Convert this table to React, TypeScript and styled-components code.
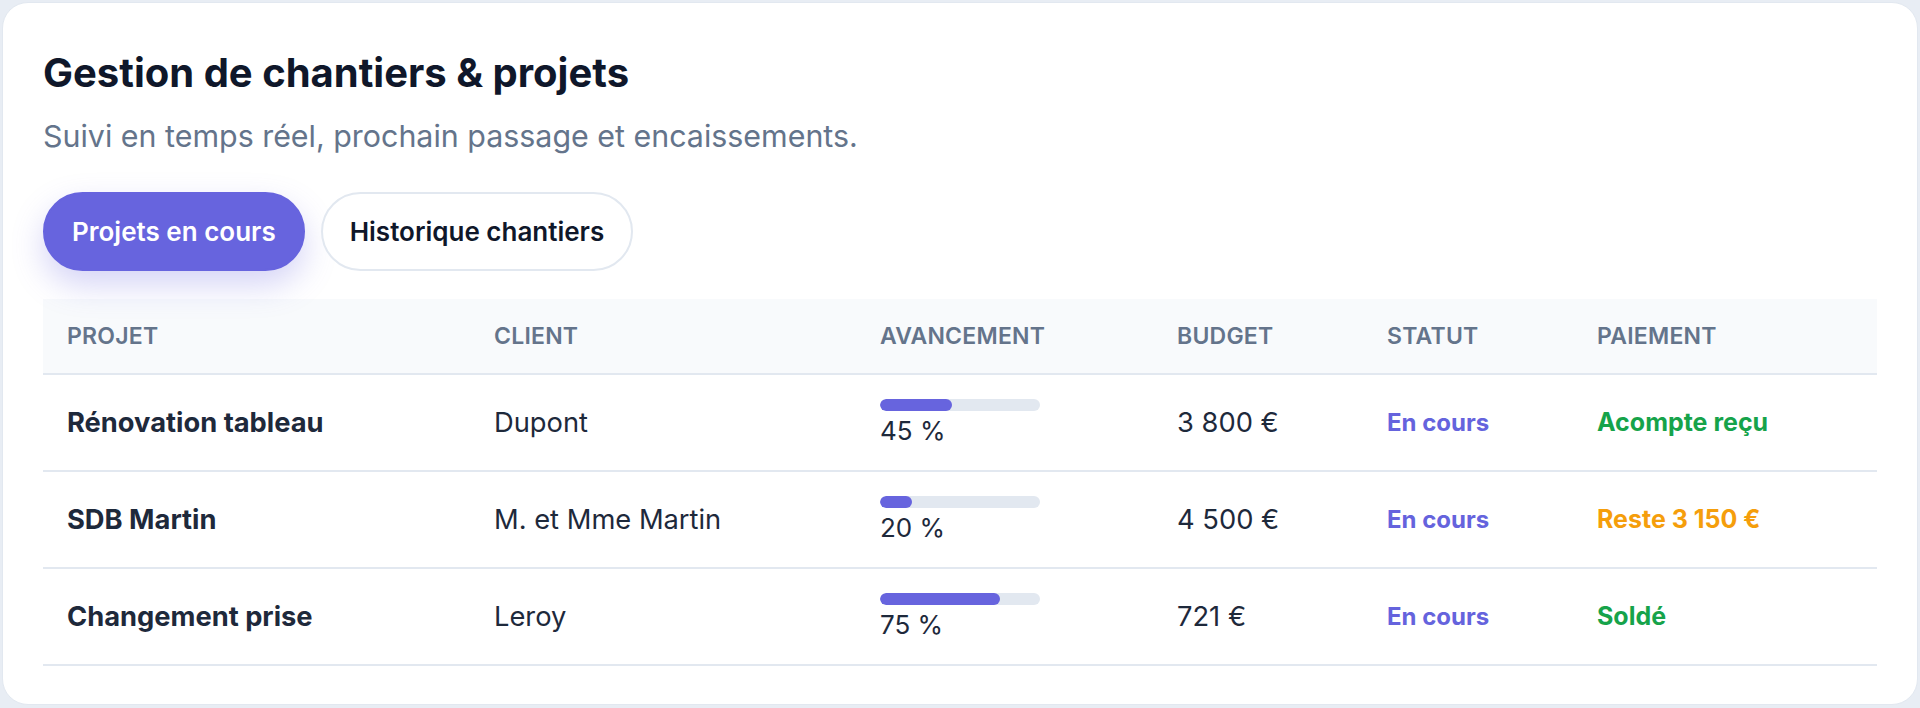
import React from "react";
import styled, { createGlobalStyle } from "styled-components";

const GlobalStyle = createGlobalStyle`
  html, body {
    margin: 0;
    padding: 0;
    background: #e8edf4;
    font-family: Inter, "Noto Sans", sans-serif;
  }
  * { box-sizing: border-box; }
`;

const Page = styled.div`
  padding: 2px 2px 3px 2px;
`;

const Card = styled.section`
  background: #ffffff;
  border: 1px solid #e2e8f0;
  border-radius: 26px;
  padding: 46px 40px 38px;
`;

const Title = styled.h1`
  margin: 0;
  font-size: 40px;
  line-height: 48px;
  font-weight: 700;
  color: #0f172a;
`;

const Subtitle = styled.p`
  margin: 17px 0 0;
  font-size: 30.4px;
  line-height: 45px;
  font-weight: 400;
  color: #64748b;
`;

const Tabs = styled.div`
  display: flex;
  gap: 16px;
  margin-top: 33px;
`;

const Tab = styled.button<{ $active?: boolean }>`
  font-family: inherit;
  font-size: 26px;
  font-weight: 600;
  line-height: 31px;
  padding: 22px 27px;
  border-radius: 999px;
  cursor: pointer;
  border: 2px solid ${(p) => (p.$active ? "#6764de" : "#e2e8f0")};
  background: ${(p) => (p.$active ? "#6764de" : "#ffffff")};
  color: ${(p) => (p.$active ? "#ffffff" : "#0f172a")};
  box-shadow: ${(p) =>
    p.$active ? "0 14px 32px rgba(103, 100, 222, 0.28)" : "none"};
`;

const Table = styled.table`
  width: 100%;
  margin-top: 28px;
  border-collapse: collapse;
  table-layout: fixed;
`;

const HeadRow = styled.tr`
  background: #f8fafc;
  border-bottom: 2px solid #e2e8f0;
`;

const Th = styled.th`
  text-align: left;
  padding: 24px 24px;
  font-size: 23px;
  line-height: 26px;
  font-weight: 600;
  color: #64748b;
  text-transform: uppercase;
  letter-spacing: 0.01em;
`;

const Row = styled.tr`
  border-bottom: 2px solid #e2e8f0;
`;

type Tone = "name" | "status" | "green" | "orange";

const toneColor: Record<Tone, string> = {
  name: "#1e293b",
  status: "#6563dd",
  green: "#16a34a",
  orange: "#f59e0b",
};

const toneSize: Record<Tone, string> = {
  name: "27.3px",
  status: "24px",
  green: "25px",
  orange: "25px",
};

const Td = styled.td<{ $tone?: Tone }>`
  padding: 24px 24px;
  font-size: ${(p) => (p.$tone ? toneSize[p.$tone] : "27.3px")};
  line-height: 39px;
  vertical-align: middle;
  font-weight: ${(p) => (p.$tone ? 700 : 400)};
  color: ${(p) => (p.$tone ? toneColor[p.$tone] : "#1e293b")};
`;

const Progress = styled.div`
  display: flex;
  flex-direction: column;
  gap: 4px;
`;

const Track = styled.div`
  width: 160px;
  height: 12px;
  border-radius: 999px;
  background: #e2e8f0;
  overflow: hidden;
`;

const Fill = styled.div`
  height: 100%;
  border-radius: 999px;
  background: #6764de;
`;

const Percent = styled.span`
  font-size: 26px;
  line-height: 31px;
  color: #1e293b;
`;

type Project = {
  name: string;
  client: string;
  progress: number;
  budget: string;
  status: string;
  payment: string;
  paymentTone: "green" | "orange";
};

const projects: Project[] = [
  { name: "Rénovation tableau", client: "Dupont", progress: 45, budget: "3 800 €", status: "En cours", payment: "Acompte reçu", paymentTone: "green" },
  { name: "SDB Martin", client: "M. et Mme Martin", progress: 20, budget: "4 500 €", status: "En cours", payment: "Reste 3 150 €", paymentTone: "orange" },
  { name: "Changement prise", client: "Leroy", progress: 75, budget: "721 €", status: "En cours", payment: "Soldé", paymentTone: "green" },
];

export default function App() {
  return (
    <>
      <GlobalStyle />
      <Page>
        <Card>
          <Title>Gestion de chantiers &amp; projets</Title>
          <Subtitle>Suivi en temps réel, prochain passage et encaissements.</Subtitle>
          <Tabs>
            <Tab $active>Projets en cours</Tab>
            <Tab>Historique chantiers</Tab>
          </Tabs>
          <Table>
            <colgroup>
              <col style={{ width: 427 }} />
              <col style={{ width: 386 }} />
              <col style={{ width: 297 }} />
              <col style={{ width: 210 }} />
              <col style={{ width: 210 }} />
              <col />
            </colgroup>
            <thead>
              <HeadRow>
                <Th>Projet</Th>
                <Th>Client</Th>
                <Th>Avancement</Th>
                <Th>Budget</Th>
                <Th>Statut</Th>
                <Th>Paiement</Th>
              </HeadRow>
            </thead>
            <tbody>
              {projects.map((p) => (
                <Row key={p.name}>
                  <Td $tone="name">{p.name}</Td>
                  <Td>{p.client}</Td>
                  <Td>
                    <Progress>
                      <Track>
                        <Fill style={{ width: `${p.progress}%` }} />
                      </Track>
                      <Percent>{p.progress} %</Percent>
                    </Progress>
                  </Td>
                  <Td>{p.budget}</Td>
                  <Td $tone="status">{p.status}</Td>
                  <Td $tone={p.paymentTone}>{p.payment}</Td>
                </Row>
              ))}
            </tbody>
          </Table>
        </Card>
      </Page>
    </>
  );
}
